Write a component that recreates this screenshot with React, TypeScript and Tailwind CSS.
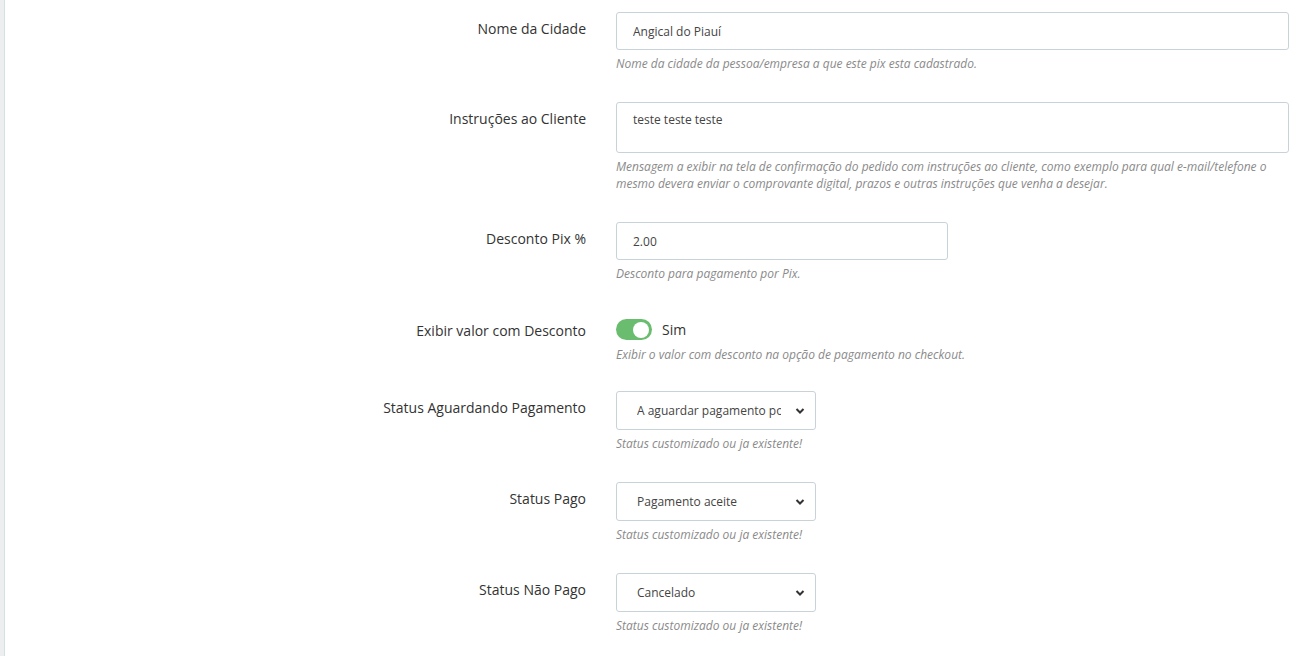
import React, { useState } from 'react';

const font = { fontFamily: '"Open Sans", "Liberation Sans", sans-serif' };

const Field = ({
  label,
  help,
  className = 'mb-[30px]',
  children,
}: {
  label: string;
  help?: React.ReactNode;
  className?: string;
  children: React.ReactNode;
}) => (
  <div className={`grid grid-cols-[581px_1fr] gap-x-[30px] ${className}`}>
    <label className="text-right text-[14px] leading-5 pt-[7px] text-[#333]">{label}</label>
    <div>
      {children}
      {help && <p className="mt-[5px] text-[12px] leading-[17px] italic text-[#8a8a8a]">{help}</p>}
    </div>
  </div>
);

const Select = ({ value, options }: { value: string; options: string[] }) => (
  <div className="relative w-[200px]">
    <select
      defaultValue={value}
      className="appearance-none w-full h-[39px] pl-[20px] pr-[34px] border border-[#c8d3d9] rounded-[3px] bg-white text-[12px] text-[#444] outline-none"
      style={font}
    >
      {options.map((o) => (
        <option key={o}>{o}</option>
      ))}
    </select>
    <svg className="pointer-events-none absolute right-[11px] top-[16px] w-[10px] h-[8px]" viewBox="0 0 10 8">
      <path d="M1.5 2l3.5 3.5L8.5 2" fill="none" stroke="#333" strokeWidth="2" />
    </svg>
  </div>
);

const statuses = ['A aguardar pagamento por Pix', 'Pagamento aceite', 'Cancelado'];

export default function App() {
  const [on, setOn] = useState(true);

  return (
    <div className="flex min-h-[656px] bg-white" style={font}>
      <div className="w-[5px] bg-[#eceef0] border-r border-[#d5e0e3]" />
      <div className="flex-1 pt-[12px] pr-[7px]">
        <Field label="Nome da Cidade" help="Nome da cidade da pessoa/empresa a que este pix esta cadastrado.">
          <input
            defaultValue="Angical do Piauí"
            className="w-full h-[38px] px-[16px] border border-[#c8d3d9] rounded-[3px] text-[12px] text-[#444] outline-none"
            style={font}
          />
        </Field>

        <Field
          label="Instruções ao Cliente"
          help="Mensagem a exibir na tela de confirmação do pedido com instruções ao cliente, como exemplo para qual e-mail/telefone o mesmo devera enviar o comprovante digital, prazos e outras instruções que venha a desejar."
        >
          <textarea
            defaultValue="teste teste teste"
            className="block w-full h-[51px] px-[16px] pt-[8px] border border-[#c8d3d9] rounded-[3px] text-[12px] leading-[17px] text-[#444] outline-none resize-none"
            style={font}
          />
        </Field>

        <Field label="Desconto Pix %" help="Desconto para pagamento por Pix.">
          <input
            defaultValue="2.00"
            className="w-[332px] h-[38px] px-[16px] border border-[#c8d3d9] rounded-[3px] text-[12px] text-[#444] outline-none"
            style={font}
          />
        </Field>

        <Field
          label="Exibir valor com Desconto"
          help="Exibir o valor com desconto na opção de pagamento no checkout."
          className="pt-[2px] mb-[28px]"
        >
          <div className="flex items-center h-[27px] pt-[4px] gap-[10px]">
            <button
              onClick={() => setOn(!on)}
              className={`relative w-[36px] h-[21px] rounded-full ${on ? 'bg-[#6abd6e]' : 'bg-[#ccc]'}`}
            >
              <span className={`absolute top-[2.5px] w-[16px] h-[16px] rounded-full bg-white ${on ? 'left-[17px]' : 'left-[3px]'}`} />
            </button>
            <span className="text-[14px] text-[#333]">Sim</span>
          </div>
        </Field>

        <Field label="Status Aguardando Pagamento" help="Status customizado ou ja existente!">
          <Select value="A aguardar pagamento por Pix" options={statuses} />
        </Field>

        <Field label="Status Pago" help="Status customizado ou ja existente!">
          <Select value="Pagamento aceite" options={statuses} />
        </Field>

        <Field label="Status Não Pago" help="Status customizado ou ja existente!">
          <Select value="Cancelado" options={statuses} />
        </Field>
      </div>
    </div>
  );
}
